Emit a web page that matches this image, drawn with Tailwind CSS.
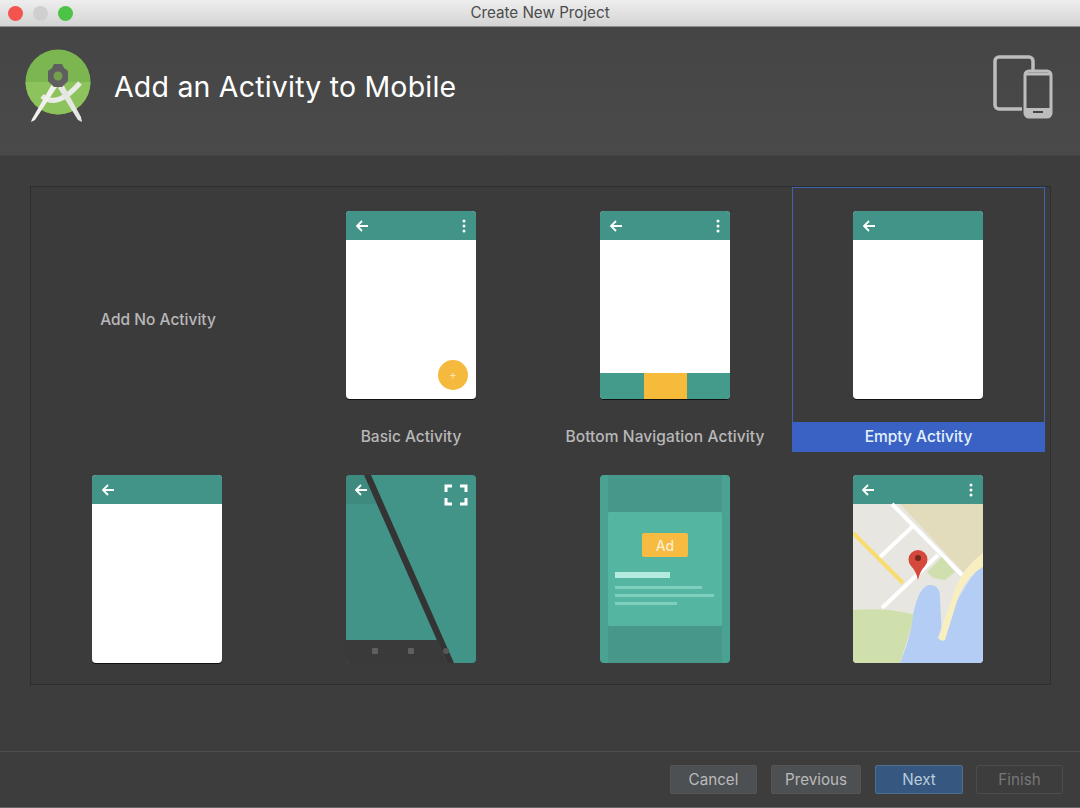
<!DOCTYPE html>
<html lang="en">
<head>
    <meta charset="UTF-8">
    <title>Create New Project</title>
    <script src="https://cdn.jsdelivr.net/npm/@tailwindcss/browser@4"></script>
</head>
<body class="bg-[#3d3d3d]">
<div class="w-[1080px] h-[808px] flex flex-col overflow-hidden bg-[#3d3d3d] font-['Inter',sans-serif]">

    <!-- title bar -->
    <div class="relative h-[27px] shrink-0 flex items-center justify-center pt-[1px] bg-gradient-to-b from-[#eeeeee] to-[#d4d4d4] border-b border-[#8f8f8f]">
        <div class="absolute left-[8px] top-[6px] flex gap-[10px]">
            <div class="w-[15px] h-[15px] rounded-full bg-[#f4544e]"></div>
            <div class="w-[15px] h-[15px] rounded-full bg-[#cfcfcf]"></div>
            <div class="w-[15px] h-[15px] rounded-full bg-[#4cc246]"></div>
        </div>
        <span class="text-[15.200px] text-[#4b4b4b]">Create New Project</span>
    </div>

    <!-- header -->
    <div class="h-[129px] shrink-0 flex items-center pl-[25px] pr-[25px] bg-gradient-to-b from-[#454545] to-[#4a4a4a] border-b border-[#424242]">
        <svg width="68" height="76" viewBox="0 0 68 76" class="shrink-0 mt-[-8px]">
            <circle cx="33" cy="33" r="32.500" fill="#7cb650"/>
            <path d="M.5 33h65a32.500 32.500 0 0 1-65 0z" fill="#8cc35c"/>
            <path d="M17 47q15 13 38-13" fill="none" stroke="#e9ece6" stroke-width="5"/>
            <path d="M27 35 7 70l-1 3 4-2 22-33z" fill="#f0f0ee"/>
            <path d="M38 35l-5 4 20 32 4 2-1-5z" fill="#e6e6e4"/>
            <path d="M29 15h8l2 4 4 3v10l-6 6h-8l-6-6V22l4-3z" fill="#5e5f5e"/>
            <circle cx="33" cy="27" r="4.500" fill="#74a04e"/>
        </svg>
        <h1 class="ml-[21px] mb-[8px] flex-1 text-[28.500px] leading-none text-white tracking-[0.2px]">Add an Activity to Mobile</h1>
        <svg width="62" height="66" viewBox="0 0 62 66" fill="none" class="shrink-0 mt-[-6px]">
            <path d="M40 15V6a4 4 0 0 0-4-4H6a4 4 0 0 0-4 4v44a4 4 0 0 0 4 4h23" stroke="#bdbdbd" stroke-width="3.500"/>
            <rect x="32" y="16" width="26" height="46" rx="4" stroke="#bdbdbd" stroke-width="3"/>
            <path d="M32 19h26" stroke="#bdbdbd" stroke-width="3"/>
            <rect x="32" y="53" width="26" height="8" fill="#bdbdbd"/>
            <path d="M40 57h10" stroke="#444" stroke-width="2"/>
        </svg>
    </div>

    <!-- gallery -->
    <div class="flex-1 px-[30px] pt-[30px]">
        <div class="w-[1021px] h-[499px] border border-[#2e2e2e] bg-[#3c3b3c]">
            <div class="ml-[-1px] w-[1016px] grid grid-cols-[254px_254px_254px_254px] grid-rows-[265px_1fr] text-[15.500px] font-medium text-[#b8b8b8]">

                <div class="flex items-center justify-center pt-[1px] pl-[2px]">Add No Activity</div>

                <div class="flex flex-col items-center">
                    <div class="h-[235px] pt-[24px]">
                        <div class="relative w-[130px] h-[188px] rounded-[4px] overflow-hidden bg-white shadow-[0_1px_0_#111]">
                            <div class="h-[29px] flex items-center justify-between pl-[9px] pr-[10px] bg-[#429488]">
                                <svg width="13" height="12" viewBox="0 0 13 12" fill="none" stroke="#fff" stroke-width="1.800"><path d="M13 6H2M7 1 2 6l5 5"/></svg>
                                <svg width="4" height="14" viewBox="0 0 4 14" fill="#fff"><circle cx="2" cy="2" r="1.500"/><circle cx="2" cy="7" r="1.500"/><circle cx="2" cy="12" r="1.500"/></svg>
                            </div>
                            <div class="absolute left-[92px] top-[149px] w-[30px] h-[30px] rounded-full bg-[#f5b93d] flex items-center justify-center text-[11px] leading-none text-[#fbe3ae]">+</div>
                        </div>
                    </div>
                    <div class="h-[30px] flex items-center">Basic Activity</div>
                </div>

                <div class="flex flex-col items-center">
                    <div class="h-[235px] pt-[24px]">
                        <div class="w-[130px] h-[188px] rounded-[4px] overflow-hidden bg-white flex flex-col shadow-[0_1px_0_#111]">
                            <div class="h-[29px] flex items-center justify-between pl-[9px] pr-[10px] bg-[#429488]">
                                <svg width="13" height="12" viewBox="0 0 13 12" fill="none" stroke="#fff" stroke-width="1.800"><path d="M13 6H2M7 1 2 6l5 5"/></svg>
                                <svg width="4" height="14" viewBox="0 0 4 14" fill="#fff"><circle cx="2" cy="2" r="1.500"/><circle cx="2" cy="7" r="1.500"/><circle cx="2" cy="12" r="1.500"/></svg>
                            </div>
                            <div class="flex-1"></div>
                            <div class="h-[26px] flex justify-center bg-[#449b8c]">
                                <div class="w-[43px] bg-[#f7bb3c]"></div>
                            </div>
                        </div>
                    </div>
                    <div class="h-[30px] flex items-center tracking-[0.1px]">Bottom Navigation Activity</div>
                </div>

                <div class="flex flex-col w-[253px]">
                    <div class="h-[235px] pt-[23px] pl-[60px] border border-b-0 border-[#3e62ad]">
                        <div class="w-[130px] h-[188px] rounded-[4px] overflow-hidden bg-white shadow-[0_1px_0_#111]">
                            <div class="h-[29px] flex items-center pl-[9px] bg-[#429488]">
                                <svg width="13" height="12" viewBox="0 0 13 12" fill="none" stroke="#fff" stroke-width="1.800"><path d="M13 6H2M7 1 2 6l5 5"/></svg>
                            </div>
                        </div>
                    </div>
                    <div class="h-[30px] flex items-center justify-center bg-[#3a62c4] text-[#e4f0ff]">Empty Activity</div>
                </div>

                <div class="flex justify-center pt-[23px]">
                    <div class="w-[130px] h-[188px] rounded-[4px] overflow-hidden bg-white shadow-[0_1px_0_#111]">
                        <div class="h-[29px] flex items-center pl-[9px] bg-[#429488]">
                            <svg width="13" height="12" viewBox="0 0 13 12" fill="none" stroke="#fff" stroke-width="1.800"><path d="M13 6H2M7 1 2 6l5 5"/></svg>
                        </div>
                    </div>
                </div>

                <div class="flex justify-center pt-[23px]">
                    <svg width="130" height="188" viewBox="0 0 130 188" class="rounded-[4px]">
                        <rect width="130" height="188" fill="#429488"/>
                        <path d="M0 0h18l13 29H0z" fill="#3e8a7f"/>
                        <path d="M0 165h91l10 23H0z" fill="#3a3a3a"/>
                        <rect x="26" y="173" width="6" height="6" rx="1" fill="#5f5f5f"/>
                        <rect x="62" y="173" width="6" height="6" rx="1" fill="#5f5f5f"/>
                        <path d="M18 0h7l83 188h-7z" fill="#343434"/>
                        <circle cx="100" cy="176" r="3" fill="#575757"/>
                        <path d="M21 15H10M15 10l-5 5 5 5" fill="none" stroke="#fff" stroke-width="1.800"/>
                        <path d="M100 17v-6h6M114 11h6v6M120 23v6h-6M106 29h-6v-6" fill="none" stroke="#fff" stroke-width="3"/>
                    </svg>
                </div>

                <div class="flex justify-center pt-[23px]">
                    <div class="w-[130px] h-[188px] rounded-[4px] overflow-hidden flex flex-col bg-[#4aa292]">
                        <div class="h-[37px] mx-[8px] bg-[#47978a]"></div>
                        <div class="h-[114px] mx-[8px] pt-[21px] px-[7px] rounded-[2px] bg-[#54b6a0]">
                            <div class="w-[46px] h-[24px] mx-auto rounded-[2px] bg-[#f6bb40] flex items-center justify-center text-[14px] font-medium text-[#fdeecb]">Ad</div>
                            <div class="mt-[15px] w-[55px] h-[6px] bg-[#b5ebdf]"></div>
                            <div class="mt-[8px] w-[87px] h-[3px] bg-[#7fcfbd]"></div>
                            <div class="mt-[5px] w-[99px] h-[3px] bg-[#7fcfbd]"></div>
                            <div class="mt-[5px] w-[62px] h-[3px] bg-[#7fcfbd]"></div>
                        </div>
                        <div class="flex-1 mx-[8px] bg-[#47978a]"></div>
                    </div>
                </div>

                <div class="flex justify-center pt-[23px] pr-[2px]">
                    <svg width="130" height="188" viewBox="0 0 130 188" class="rounded-[4px]">
                        <rect width="130" height="188" fill="#e8e6e1"/>
                        <rect width="130" height="29" fill="#429488"/>
                        <path d="M47 29h83v49l-20 19z" fill="#e3dcbc"/>
                        <path d="M39 29l70 71M27 82l32-30M29 133l56-53" fill="none" stroke="#fff" stroke-width="4"/>
                        <path d="M0 58l50 50" fill="none" stroke="#f9dc6f" stroke-width="4"/>
                        <path d="M89 82l13 15-10 8-12-2-6-6z" fill="#cfe0ae"/>
                        <path d="M0 135q35-3 62 5l-15 48H0z" fill="#cfe0ac"/>
                        <path d="M47 188q12-30 13-48 6-30 17-30 10 0 10 13l2 42q8-30 20-48 8-15 21-28v99z" fill="#b4cdf5"/>
                        <path d="M130 78q-24 18-31 45l-14 40q3 4 7 2l13-42q6-20 25-31z" fill="#f7efc0"/>
                        <path d="M65 105q-2-9-7-14a9.500 9.500 0 1 1 14 0q-5 5-7 14z" fill="#d5493d"/>
                        <circle cx="65" cy="83" r="3" fill="#70281f"/>
                        <path d="M21 15H10M15 10l-5 5 5 5" fill="none" stroke="#fff" stroke-width="1.800"/>
                        <g fill="#fff"><circle cx="118" cy="10" r="1.500"/><circle cx="118" cy="15" r="1.500"/><circle cx="118" cy="20" r="1.500"/></g>
                    </svg>
                </div>

            </div>
        </div>
    </div>

    <!-- footer buttons -->
    <div class="h-[57px] shrink-0 border-t border-b border-t-[#4f4f4f] border-b-[#666666] flex justify-end gap-[14px] pt-[13px] pr-[17px] text-[15.200px]">
        <button class="w-[87px] h-[29px] pt-[1px] rounded-[2px] bg-[#4d5052] border border-[#555] text-[#bbbbbb]">Cancel</button>
        <button class="w-[90px] h-[29px] pt-[1px] rounded-[2px] bg-[#4d5052] border border-[#555] text-[#bbbbbb]">Previous</button>
        <button class="w-[88px] h-[29px] pt-[1px] rounded-[2px] bg-[#365880] border border-[#4c708c] text-[#bbccdd]">Next</button>
        <button class="w-[87px] h-[29px] pt-[1px] ml-[-1px] rounded-[2px] border border-[#4c4c4c] text-[#777777]">Finish</button>
    </div>
</div>
</body>
</html>
